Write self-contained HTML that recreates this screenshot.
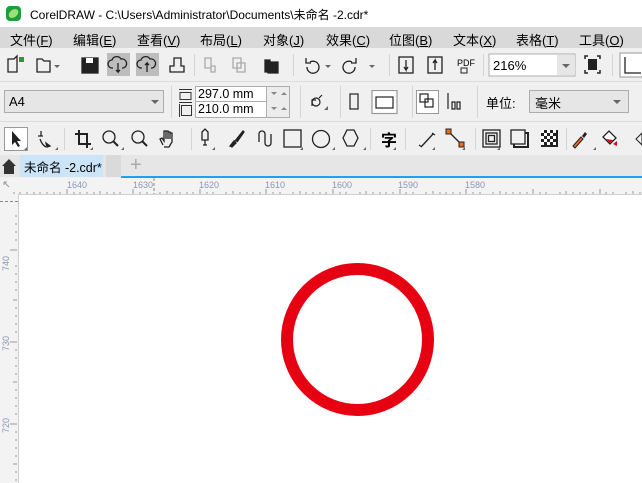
<!DOCTYPE html>
<html><head><meta charset="utf-8"><style>
*{margin:0;padding:0;box-sizing:border-box}
body{width:642px;height:483px;overflow:hidden;background:#f0f0f0;font-family:"Liberation Sans","Noto Sans CJK SC",sans-serif;font-size:12px;color:#000;position:relative}
.a{position:absolute;white-space:nowrap}
.menu span{position:absolute;top:3px;font-size:13px}
.sep{position:absolute;width:1px;background:#d4d4d4}
</style></head><body>
<div class="a" style="left:0;top:0;width:642px;height:27px;background:#fff"></div>
<div class="a" style="left:6px;top:6px;width:15px;height:15px;border-radius:4px;background:#1e9e3a"></div>
<div class="a" style="left:9px;top:9px;width:9px;height:9px;border-radius:50%;background:#9be07a;transform:skew(-20deg)"></div>
<div class="a" style="left:30px;top:6px;font-size:12px">CorelDRAW - C:\Users\Administrator\Documents\未命名 -2.cdr*</div>
<div class="a menu" style="left:0;top:27px;width:642px;height:21px;background:#d9d9d9">
<span style="left:10px">文件(<u>F</u>)</span><span style="left:73px">编辑(<u>E</u>)</span><span style="left:137px">查看(<u>V</u>)</span><span style="left:200px">布局(<u>L</u>)</span><span style="left:263px">对象(<u>J</u>)</span><span style="left:326px">效果(<u>C</u>)</span><span style="left:389px">位图(<u>B</u>)</span><span style="left:453px">文本(<u>X</u>)</span><span style="left:516px">表格(<u>T</u>)</span><span style="left:579px">工具(<u>O</u>)</span>
</div>
<svg class="a" style="left:0;top:48px" width="642" height="34" viewBox="0 0 642 34">
<g fill="none" stroke="#222" stroke-width="1.3">
<path d="M8 11h6l3-3v16H8z"/><rect x="19" y="9" width="5" height="5" fill="#1e9e3a" stroke="none"/>
<path d="M37 24V11h5l2 2h6v11z"/><path d="M54 17l3 3 3-3z" fill="#666" stroke="none"/>
<rect x="82" y="10" width="16" height="15" fill="#222"/><rect x="86" y="10" width="7" height="5" fill="#fff" stroke="none"/>
</g>
<rect x="107" y="5" width="23" height="23" fill="#bdbdbd"/><rect x="136" y="5" width="23" height="23" fill="#bdbdbd"/>
<g fill="none" stroke="#222" stroke-width="1.3">
<path d="M113 20h-1a4 4 0 010-8 5 5 0 019-1 4 4 0 012 9h-1M118 15v9l-2-2M118 24l2-2"/>
<path d="M142 20h-1a4 4 0 010-8 5 5 0 019-1 4 4 0 012 9h-1M147 24v-9l-2 2M147 15l2 2"/>
<path d="M170 24h14v-6h-3v-8h-7v8h-4z"/>
<g stroke="#aaa"><path d="M205 10h6v10h-6zM211 18h4v6h-4z"/><path d="M233 10h8v10h-8zM237 15h8v9h-8z"/></g>
<path d="M265 12h5v12h-5zM268 14h10v11h-10z" fill="#222"/>
<path d="M310 14a6 6 0 11-3 5"/><path d="M306 10v5h5"/><path d="M325 17l3 3 3-3z" fill="#666" stroke="none"/>
<path d="M352 14a6 6 0 10 3 5"/><path d="M356 10v5h-5"/><path d="M369 17l3 3 3-3z" fill="#666" stroke="none"/>
<rect x="399" y="9" width="14" height="16"/><path d="M406 12v10l-2-3M406 22l2-3"/>
<rect x="428" y="9" width="14" height="16"/><path d="M435 22V12l-2 3M435 12l2 3"/>
</g>
<text x="457" y="18" font-size="9" font-family="Liberation Sans">PDF</text><rect x="461" y="20" width="6" height="5" fill="none" stroke="#222"/>
<rect x="489" y="6" width="86" height="22" fill="#fff" stroke="#adadad"/><rect x="557" y="7" width="18" height="20" fill="#e6e6e6"/>
<path d="M562 16l4 4 4-4z" fill="#666"/>
<text x="493" y="22" font-size="13" font-family="Liberation Sans">216%</text>
<g stroke="#222" stroke-width="1.5" fill="none"><path d="M585 11v-3h3M597 8h3v3M600 22v3h-3M588 25h-3v-3"/></g><rect x="588" y="11" width="9" height="11" fill="#222"/>
<rect x="620" y="5" width="24" height="24" fill="#fff" stroke="#999"/><path d="M625 9v16h16" fill="none" stroke="#222" stroke-width="1.3"/>
</svg>
<div class="sep" style="left:194px;top:54px;height:22px"></div><div class="sep" style="left:293px;top:54px;height:22px"></div><div class="sep" style="left:389px;top:54px;height:22px"></div><div class="sep" style="left:483px;top:54px;height:22px"></div><div class="sep" style="left:612px;top:54px;height:22px"></div>
<div class="a" style="left:0;top:81px;width:642px;height:1px;background:#dcdcdc"></div>
<div class="a" style="left:4px;top:90px;width:160px;height:23px;background:#e6e6e6;border:1px solid #adadad;padding:3px 4px;font-size:13px">A4</div>
<svg class="a" style="left:150px;top:99px" width="10" height="6"><path d="M1 1l4 4 4-4z" fill="#666"/></svg>
<div class="sep" style="left:171px;top:86px;height:32px"></div>
<svg class="a" style="left:178px;top:86px" width="16" height="32"><g fill="none" stroke="#333"><path d="M1 3.5h13M1 16.5h13M2 6.5h11v7H2z"/><path d="M1.5 18v13M3.5 19.5h10v10h-10z"/></g></svg>
<div class="a" style="left:195px;top:86px;width:95px;height:32px;background:#fff;border:1px solid #adadad"></div>
<div class="a" style="left:195px;top:101px;width:95px;height:1px;background:#adadad"></div>
<div class="a" style="left:266px;top:86px;width:1px;height:32px;background:#adadad"></div>
<div class="a" style="left:267px;top:87px;width:22px;height:30px;background:#ececec"></div>
<div class="a" style="left:198px;top:87px;font-size:12.5px">297.0 mm</div>
<div class="a" style="left:198px;top:102px;font-size:12.5px">210.0 mm</div>
<svg class="a" style="left:270px;top:88px" width="20" height="28"><g fill="#888"><path d="M1 4h6l-3 3zM11 7h6l-3-3zM1 19h6l-3 3zM11 22h6l-3-3z"/></g></svg>
<div class="sep" style="left:300px;top:86px;height:32px"></div>
<svg class="a" style="left:305px;top:90px" width="24" height="24"><g fill="none" stroke="#222" stroke-width="1.2"><circle cx="11" cy="12" r="4"/><path d="M7 16v-6h4M14 8l3-3"/></g><path d="M19 20h4v-4z" fill="#666"/></svg>
<div class="sep" style="left:340px;top:86px;height:32px"></div>
<svg class="a" style="left:345px;top:90px" width="60" height="26"><g fill="none" stroke="#222" stroke-width="1.2"><rect x="5" y="4" width="8" height="15"/><rect x="27" y="0.5" width="25" height="23" fill="#fff" stroke="#999"/><rect x="31" y="7" width="17" height="11"/></g></svg>
<div class="sep" style="left:412px;top:86px;height:32px"></div>
<svg class="a" style="left:416px;top:90px" width="56" height="26"><rect x="0.5" y="0.5" width="22" height="23" fill="#fff" stroke="#999"/><g fill="none" stroke="#222" stroke-width="1.2"><rect x="4" y="4" width="8" height="8"/><rect x="9" y="9" width="8" height="8"/><path d="M32 3v16M36 12h3v7h-3zM41 12h3v7h-3z"/></g></svg>
<div class="sep" style="left:477px;top:86px;height:32px"></div>
<div class="a" style="left:486px;top:93px;font-size:13px">单位:</div>
<div class="a" style="left:529px;top:90px;width:100px;height:23px;background:#e6e6e6;border:1px solid #adadad;padding:2px 5px;font-size:13px">毫米</div>
<svg class="a" style="left:612px;top:99px" width="10" height="6"><path d="M1 1l4 4 4-4z" fill="#666"/></svg>
<div class="a" style="left:0;top:121px;width:642px;height:1px;background:#dcdcdc"></div>
<svg class="a" style="left:0;top:122px" width="642" height="34" viewBox="0 0 642 34">
<rect x="4.5" y="5.5" width="23" height="23" fill="#fff" stroke="#999"/>
<path d="M12 9v14l3-3 3 5 2-1-3-5h4z" fill="#222"/>
<g fill="none" stroke="#222" stroke-width="1.3">
<path d="M41 9v5M38 14h5M40 17q2 6 6 8"/><path d="M46 21l4 3-3 1z" fill="#222"/>
<path d="M79 8v14h12M75 12h12v14" stroke-width="2"/>
<circle cx="109" cy="15" r="6"/><path d="M113 19l5 5" stroke-width="2"/>
<circle cx="138" cy="15" r="6"/><path d="M142 19l5 5" stroke-width="2"/>
<path d="M163 23l-3-6 2-1 2 3V9h2v8M166 9h2v8M168 10h2v7M170 11h2v9l-3 5h-5"/>
<path d="M202 10l3-3 3 3v8h-6zM205 18v5M203 23h4"/>
<path d="M230 24l4-5 2 2-4 4zM235 19l8-10 1 1-7 10" fill="#222"/>
<path d="M259 20v-8a3 3 0 016 0v9a3 3 0 006 0V12"/>
<rect x="284" y="8" width="17" height="17"/>
<circle cx="321" cy="17" r="8.5"/>
<path d="M347 8h7l4 8-4 8h-7l-4-8z"/>
<path d="M421 25l12-13M419 23l3 2M432 11l3 2"/>
<path d="M449 10l13 13"/>
<rect x="483" y="8" width="17" height="17"/><rect x="486" y="11" width="11" height="11"/><rect x="488.5" y="13.5" width="6" height="6"/>
<rect x="511" y="8" width="14" height="14"/><path d="M525 11h3v14h-14v-3" stroke-width="2"/>
</g>
<text x="381" y="24" font-size="16" font-family="Noto Sans CJK SC" font-weight="bold">字</text>
<rect x="446" y="7" width="5" height="5" fill="#f26a1b" stroke="#222"/><rect x="459" y="20" width="5" height="5" fill="#f26a1b" stroke="#222"/>
<rect x="541" y="8" width="17" height="17" fill="#222"/>
<g fill="#fff"><rect x="541" y="8" width="3" height="3"/><rect x="547" y="8" width="3" height="3"/><rect x="553" y="8" width="3" height="3"/><rect x="544" y="11" width="3" height="3"/><rect x="550" y="11" width="3" height="3"/><rect x="541" y="14" width="3" height="3"/><rect x="547" y="14" width="3" height="3"/><rect x="553" y="14" width="3" height="3"/><rect x="544" y="17" width="3" height="3"/><rect x="550" y="17" width="3" height="3"/><rect x="541" y="20" width="3" height="3"/><rect x="547" y="20" width="3" height="3"/><rect x="553" y="20" width="3" height="3"/></g>
<path d="M573 24l8-9 2 2-8 9z" fill="#f26a1b" stroke="#222"/><path d="M582 14l3-4 2 2-3 4z" fill="#222"/>
<path d="M603 15l6-6 7 7-6 6z" fill="#fff" stroke="#222" stroke-width="1.3"/><path d="M606 17l4 4 3-3z" fill="#e0001b"/><path d="M613 22l4-3v5z" fill="#e0001b"/>
<path d="M636 17l6-6v12z" fill="none" stroke="#222"/>
<g fill="#666"><path d="M27 28h-3l3-3zM58 28h-3l3-3zM93 28h-3l3-3zM124 28h-3l3-3zM215 28h-3l3-3zM303 28h-3l3-3zM335 28h-3l3-3zM366 28h-3l3-3zM396 28h-3l3-3zM435 28h-3l3-3zM465 28h-3l3-3zM500 28h-3l3-3zM596 28h-3l3-3z"/></g>
</svg>
<div class="sep" style="left:64px;top:128px;height:22px"></div><div class="sep" style="left:191px;top:128px;height:22px"></div><div class="sep" style="left:370px;top:128px;height:22px"></div><div class="sep" style="left:405px;top:128px;height:22px"></div><div class="sep" style="left:475px;top:128px;height:22px"></div><div class="sep" style="left:566px;top:128px;height:22px"></div>
<div class="a" style="left:0;top:155px;width:642px;height:22px;background:#e6e6e6"></div>
<svg class="a" style="left:1px;top:157px" width="16" height="18"><path d="M1 9l7-7 7 7h-2v8H3V9z" fill="#333"/></svg>
<div class="a" style="left:20px;top:155px;width:83px;height:22px;background:#cce4f7;padding:2px 0 0 4px;font-size:12.5px">未命名 -2.cdr*</div>
<div class="a" style="left:106px;top:155px;width:15px;height:22px;background:#dadada"></div>
<div class="a" style="left:130px;top:155px;font-size:20px;color:#aaa;line-height:20px">+</div>
<div class="a" style="left:121px;top:176px;width:521px;height:2px;background:#1ea1f2"></div>
<div class="a" style="left:0;top:178px;width:642px;height:16px;background:#f3f3f3"></div>
<div class="a" style="left:0;top:194px;width:18px;height:289px;background:#f3f3f3"></div>
<div class="a" style="left:18px;top:194px;width:624px;height:289px;background:#fff;border-left:1px solid #d0d0d0;border-top:1px solid #d0d0d0"></div>
<svg class="a" style="left:0;top:178px" width="642" height="305">
<g font-size="9" fill="#8a96b2" font-family="Liberation Sans"><text x="67" y="10">1640</text><text x="133" y="10">1630</text><text x="199" y="10">1620</text><text x="265" y="10">1610</text><text x="332" y="10">1600</text><text x="398" y="10">1590</text><text x="465" y="10">1580</text>
<text transform="translate(9 93) rotate(-90)">740</text><text transform="translate(9 173) rotate(-90)">730</text><text transform="translate(9 255) rotate(-90)">720</text></g>
<g stroke="#999"><path d="M14 14v2M20 14v2M27 14v2M34 14v2M40 14v2M47 14v2M54 14v2M60 14v2M74 14v2M80 14v2M87 14v2M94 14v2M100 14v2M107 14v2M114 14v2M120 14v2M140 14v2M147 14v2M160 14v2M173 14v2M180 14v2M187 14v2M193 14v2M200 14v2M207 14v2M213 14v2M226 14v2M240 14v2M247 14v2M253 14v2M260 14v2M266 14v2M273 14v2M280 14v2M293 14v2M306 14v2M313 14v2M320 14v2M326 14v2M333 14v2M340 14v2M346 14v2M360 14v2M373 14v2M380 14v2M386 14v2M393 14v2M400 14v2M406 14v2M413 14v2M426 14v2M440 14v2M446 14v2M453 14v2M460 14v2M466 14v2M473 14v2M480 14v2M493 14v2M506 14v2M513 14v2M520 14v2M527 14v2M533 14v2M540 14v2M546 14v2M560 14v2M573 14v2M580 14v2M586 14v2M593 14v2M600 14v2M606 14v2M613 14v2M626 14v2M640 14v2"/>
<path d="M67 11v5M133 11v5M200 11v5M266 11v5M333 11v5M400 11v5M466 11v5M533 11v5M600 11v5M100 13v3M167 13v3M233 13v3M300 13v3M366 13v3M433 13v3M500 13v3M566 13v3M633 13v3"/>
<path d="M15 38h2M15 46h2M15 54h2M15 62h2M10 72h7M15 88h2M15 96h2M15 104h2M15 112h2M13 122h4M15 130h2M15 138h2M15 146h2M15 154h2M10 164h7M15 172h2M15 180h2M15 188h2M15 196h2M13 204h4M15 212h2M15 220h2M15 228h2M15 236h2M10 246h7M15 254h2M15 262h2M15 270h2M15 278h2M13 286h4M15 294h2M15 302h2"/></g>
<path d="M154 0v16M0 23.5h18" stroke="#888" stroke-dasharray="3 2"/>
<path d="M4 4l5 5M4 4h3M4 4v3" stroke="#999" fill="none"/>
</svg>
<svg class="a" style="left:0;top:0" width="642" height="483"><circle cx="357.5" cy="339.5" r="70.5" fill="none" stroke="#e60012" stroke-width="12"/></svg>
</body></html>
